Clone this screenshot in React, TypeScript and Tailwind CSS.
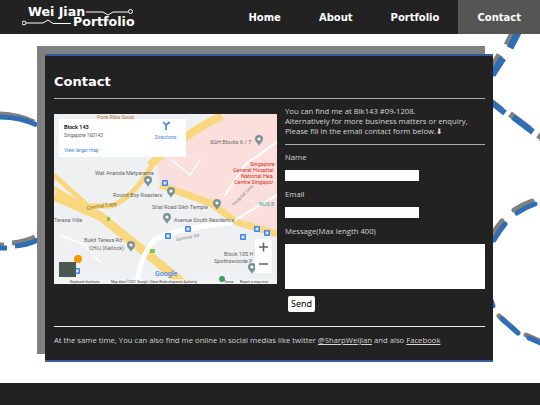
import React from 'react';

const NAV_ITEMS = ['Home', 'About', 'Portfolio', 'Contact'];

// background circle dashes: [path, stroke width, line cap]
const DASHES: [string, number, 'butt' | 'round'][] = [
    ['M524 21 L510 48 M503 58 L492 75', 7, 'butt'],
    ['M491 102 L505 113 M513 117 L533 132 M541 138 L548 143', 6, 'butt'],
    ['M535 204 Q526 207 517 213 M505 224 Q499 231 494 240', 5, 'round'],
    ['M491 300 L493 306 M502 319 L518 333 M529 338 L545 345', 5, 'round'],
    ['M-2 117 Q20 117 37 125 M-2 248 L7 248 M15 246 Q27 245 38 240', 5, 'butt'],
];

function Decor() {
    return (
        <svg className="absolute left-0 top-0 -z-10" width="540" height="405" viewBox="0 0 540 405" fill="none">
            {DASHES.map(([d, w, cap], i) => (
                <g key={i}>
                    <path d={d} stroke="#808080" strokeWidth={w} strokeLinecap={cap} transform="translate(-3 -3)" />
                    <path d={d} stroke="#2f6db5" strokeWidth={w} strokeLinecap={cap} />
                </g>
            ))}
        </svg>
    );
}

function Logo() {
    return (
        <div className="ml-[28px] flex flex-col font-['DejaVu_Sans',sans-serif] text-[12.6px] font-bold leading-[10px] text-white">
            <div className="flex items-center">
                <span>Wei Jian</span>
                <svg width="48" height="10" viewBox="0 0 48 10" fill="none" stroke="white" strokeWidth="1">
                    <path d="M1 5 H18 L23 8 L28 5 H43" />
                    <circle cx="45.5" cy="4.5" r="2" />
                </svg>
            </div>
            <div className="flex items-center">
                <svg width="50" height="10" viewBox="0 0 50 10" fill="none" stroke="white" strokeWidth="1" className="-ml-[6px] mr-[1px]">
                    <circle cx="2" cy="6" r="2" />
                    <path d="M4 6 H21 L26 3 L31 6.5 H49" />
                </svg>
                <span>Portfolio</span>
            </div>
        </div>
    );
}

function MapPin({ x, y }: { x: number; y: number }) {
    return (
        <g transform={`translate(${x} ${y})`}>
            <path d="M0 5 C-1 2 -4 1 -4 -2 A4 4 0 0 1 4 -2 C4 1 1 2 0 5Z" fill="#7b9199" />
            <circle cx="0" cy="-2" r="1.6" fill="#fff" />
        </g>
    );
}

function BusStop({ x, y }: { x: number; y: number }) {
    return (
        <g>
            <rect x={x - 3} y={y - 3} width="6" height="6" rx="1" fill="#3b82f6" />
            <rect x={x - 1.5} y={y - 1.5} width="3" height="3" fill="#dbeafe" />
        </g>
    );
}

function FakeMap() {
    const labels: [number, number, string, string][] = [
        [97, 119, 'Pork Ribs Soup', '#b0743a'],
        [95, 175, 'Wat Ananda Metyarama', '#666'],
        [113, 197, 'Round Boy Roasters', '#666'],
        [210, 144, 'SGH Blocks 6 / 7', '#666'],
        [152, 209, 'Silat Road Sikh Temple', '#666'],
        [174, 222, 'Avenue South Residence', '#666'],
        [54, 222, 'Teresa Ville', '#666'],
        [84, 242, 'Bukit Teresa Rd', '#666'],
        [89, 250, 'CHIJ (Kellock)', '#666'],
        [224, 256, 'Block 105 H', '#666'],
        [214, 263, 'Spottiswoode P', '#666'],
    ];
    return (
        <svg width="223" height="170" viewBox="54 114 223 170" className="block shrink-0 bg-[#eef0f1]">
            <path d="M157 165 L197 128 L225 114 L277 114 L277 236 L237 216 L190 198 L160 185 Z" fill="#fbdfdc" />
            <g fill="none" stroke="#f9d77f" strokeLinecap="butt">
                <path d="M150 165 Q190 130 222 116" strokeWidth="8" />
                <path d="M54 175 L88 206 L112 206 Q135 196 152 165" strokeWidth="5" />
                <path d="M54 196 L100 216 L150 256 L186 286" strokeWidth="9" />
                <path d="M160 185 L210 203 L237 222 L277 234" strokeWidth="7" />
                <path d="M54 188 L80 204" strokeWidth="4" />
            </g>
            <g fill="none" stroke="#fff" strokeLinecap="round">
                <path d="M137 284 Q140 255 155 240 Q175 228 230 223" strokeWidth="5" />
                <path d="M225 195 L245 165 L277 142" strokeWidth="2" />
                <path d="M172 160 L190 175 L200 160" strokeWidth="1.5" />
                <path d="M60 235 L85 245 L100 262" strokeWidth="1.5" />
                <path d="M230 223 L277 195" strokeWidth="2" />
            </g>
            {labels.map(([x, y, t, c]) => (
                <text key={t} x={x} y={y} fontFamily="Roboto, sans-serif" fontSize="5.5" fill={c}>{t}</text>
            ))}
            <text x="87" y="210" fontFamily="Roboto, sans-serif" fontSize="5.5" fill="#8a6a2a" transform="rotate(-9 87 210)">Central Expy</text>
            <text x="176" y="241" fontFamily="Roboto, sans-serif" fontSize="4.6" fill="#888" transform="rotate(-10 176 241)">Spooner Rd</text>
            <text x="234" y="206" fontFamily="Roboto, sans-serif" fontSize="4.6" fill="#888" transform="rotate(-45 234 206)">Hospital Cres</text>
            <text x="250" y="166" fontFamily="Roboto, sans-serif" fontSize="5.5" fill="#d93025">Singapore</text>
            <text x="233" y="172" fontFamily="Roboto, sans-serif" fontSize="5.5" fill="#d93025">General Hospital</text>
            <text x="241" y="178" fontFamily="Roboto, sans-serif" fontSize="5.5" fill="#d93025">National Hea</text>
            <text x="234" y="184" fontFamily="Roboto, sans-serif" fontSize="5.5" fill="#d93025">Centre Singapor</text>
            <text x="259" y="206" fontFamily="Roboto, sans-serif" fontSize="5.5" fill="#3aa6a6">NUS B</text>
            <MapPin x={259} y={141} />
            <MapPin x={148} y={182} />
            <MapPin x={171} y={193} />
            <MapPin x={217} y={205} />
            <MapPin x={167} y={219} />
            <MapPin x={131} y={247} />
            <MapPin x={252} y={269} />
            <circle cx="78" cy="259" r="4" fill="#f29900" />
            <BusStop x={165} y={183} />
            <BusStop x={188} y={229} />
            <BusStop x={168} y={236} />
            <BusStop x={243} y={237} />
            <BusStop x={257} y={229} />
            <BusStop x={267} y={233} />
            <BusStop x={77} y={271} />
            <rect x="150" y="249" width="5" height="4" fill="#8bc34a" />
            <rect x="107" y="217" width="3" height="4" fill="#8bc34a" />
            <rect x="59" y="262" width="17" height="15" fill="#4b5a50" />
            <rect x="54" y="279" width="223" height="5" fill="#f5f5f5" opacity="0.8" />
            <circle cx="222" cy="279" r="3" fill="#34a853" />
            <text x="70" y="283" fontFamily="Roboto, sans-serif" fontSize="3.4" fill="#333">Keyboard shortcuts</text>
            <text x="111" y="283" fontFamily="Roboto, sans-serif" fontSize="3.4" fill="#333">Map data ©2021 Google, Urban Redevelopment Authority</text>
            <text x="224" y="283" fontFamily="Roboto, sans-serif" fontSize="3.4" fill="#333">Terms</text>
            <text x="240" y="283" fontFamily="Roboto, sans-serif" fontSize="3.4" fill="#333">Report a map error</text>
            <text x="155" y="276" fontFamily="Roboto, sans-serif" fontSize="7" fontWeight="500" fill="#4285f4">Google</text>
            <rect x="255" y="239" width="17" height="34" fill="#fff" />
            <path d="M259 247 H268 M263.5 242.5 V251.5 M259 264 H268" stroke="#666" strokeWidth="1.6" />
            <rect x="59" y="119" width="127" height="38" fill="#fff" />
            <text x="64" y="129" fontFamily="Roboto, sans-serif" fontSize="5.5" fontWeight="700" fill="#222">Block 143</text>
            <text x="64" y="137" fontFamily="Roboto, sans-serif" fontSize="4.8" fill="#5b5b5b">Singapore 160143</text>
            <text x="64" y="152" fontFamily="Roboto, sans-serif" fontSize="4.8" fill="#3a84df">View larger map</text>
            <text x="155" y="139" fontFamily="Roboto, sans-serif" fontSize="4.8" fill="#3a84df">Directions</text>
            <path d="M166 130 V125 L163 122 M166 125 L170 122" fill="none" stroke="#3a84df" strokeWidth="1.6" />
        </svg>
    );
}

export default function App() {
    return (
        <div className="relative isolate flex h-[405px] w-[540px] flex-col overflow-hidden bg-white font-['Open_Sans',sans-serif]">
            <Decor />

            {/* Header */}
            <header className="flex h-[34px] shrink-0 items-center justify-between bg-[#222]">
                <Logo />
                <nav className="flex h-full font-['DejaVu_Sans',sans-serif] text-[10px] font-bold text-white">
                    {NAV_ITEMS.map(item => (
                        <a key={item} className={`flex h-full items-center px-[19px] ${item === 'Contact' ? 'bg-[#555]' : ''}`}>
                            {item}
                        </a>
                    ))}
                </nav>
            </header>

            {/* Card */}
            <main className="ml-[45px] mt-[20px] h-[308px] w-[448px] shrink-0 border-y-2 border-[#2f5f9e] bg-[#222] pl-[9px] pr-[8px] text-[7.7px] leading-[10px] text-[#d4d4d4] shadow-[-8px_-8px_0_#808080]">
                <h1 className="mt-[18px] font-['DejaVu_Sans',sans-serif] text-[13px] font-bold leading-[16px] text-white">Contact</h1>
                <hr className="mt-[8px] border-t border-[#aaa]" />
                <div className="mt-[15px] flex gap-[8px]">
                    <FakeMap />
                    <div className="flex-1">
                        <p className="-mt-[8px]">
                            You can find me at Blk143 #09-1208.<br />
                            Alternatively for more business matters or enquiry,<br />
                            Please fill in the email contact form below.<span className="font-['DejaVu_Sans'] font-bold">⬇</span>
                        </p>
                        <hr className="mt-[7px] border-t border-[#aaa]" />
                        <label className="mt-[7px] block">Name</label>
                        <input className="mt-[8px] block h-[11px] w-[134px] bg-white" />
                        <label className="mt-[8px] block">Email</label>
                        <input className="mt-[8px] block h-[11px] w-[134px] bg-white" />
                        <label className="mt-[8px] block">Message(Max length 400)</label>
                        <textarea className="mt-[8px] block h-[45px] w-full resize-none bg-white" />
                        <button className="ml-[3px] mt-[7px] block h-[16px] w-[27px] rounded-[2px] bg-white font-['Noto_Sans',sans-serif] text-[9px] text-black">Send</button>
                    </div>
                </div>
                <hr className="mt-[14px] border-t border-[#eee]" />
                <p className="mt-[8px]">
                    At the same time, You can also find me online in social medias like twitter <a className="underline">@SharpWeijian</a> and also <a className="underline">Facebook</a>
                </p>
            </main>

            {/* Footer */}
            <footer className="mt-auto h-[22px] shrink-0 bg-[#222]" />
        </div>
    );
}
